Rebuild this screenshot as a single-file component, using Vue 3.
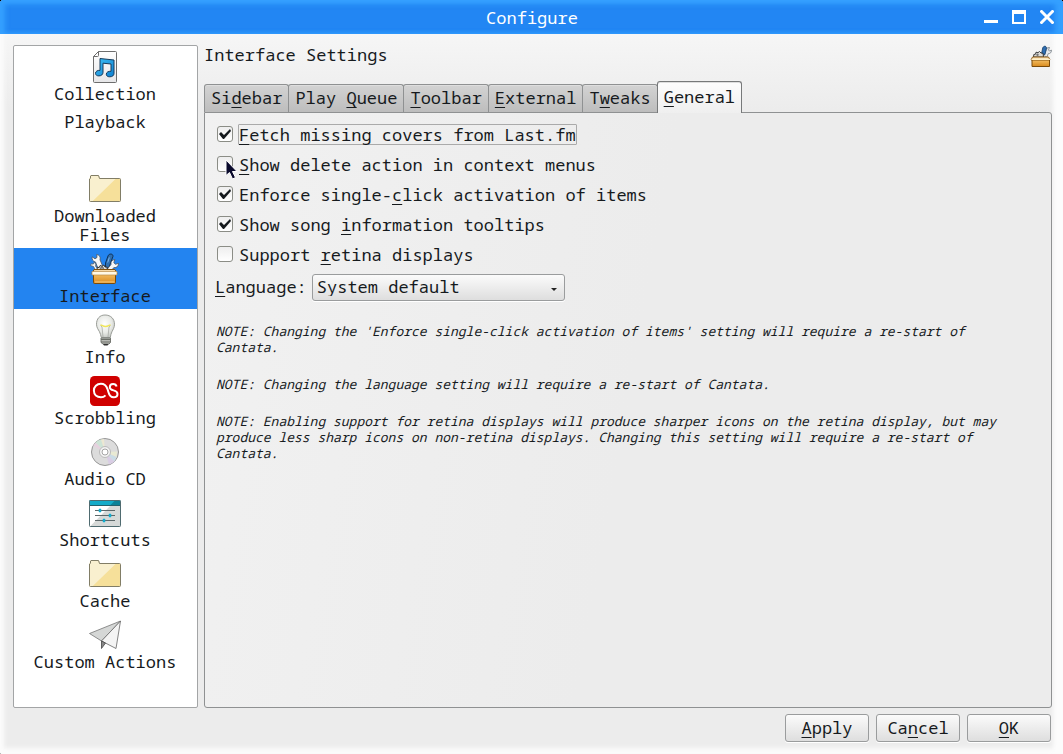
<script setup>
import { ref } from 'vue'

const pages = [
  { icon: 'music', label: 'Collection' },
  { icon: '', label: 'Playback' },
  { icon: 'folder', label: 'Downloaded Files' },
  { icon: 'toolbox', label: 'Interface' },
  { icon: 'bulb', label: 'Info' },
  { icon: 'lastfm', label: 'Scrobbling' },
  { icon: 'disc', label: 'Audio CD' },
  { icon: 'sliders', label: 'Shortcuts' },
  { icon: 'folder', label: 'Cache' },
  { icon: 'plane', label: 'Custom Actions' },
]
const currentPage = ref('Interface')

// Each caption is split around its keyboard accelerator letter.
const tabs = [
  ['Si', 'd', 'ebar'],
  ['Play ', 'Q', 'ueue'],
  ['', 'T', 'oolbar'],
  ['', 'E', 'xternal'],
  ['T', 'w', 'eaks'],
  ['', 'G', 'eneral'],
]
const currentTab = ref(5)

const options = ref([
  { id: 'covers', text: ['', 'F', 'etch missing covers from Last.fm'], on: true, focus: true },
  { id: 'delete', text: ['', 'S', 'how delete action in context menus'], on: false, pointer: true },
  { id: 'click', text: ['Enforce single-', 'c', 'lick activation of items'], on: true },
  { id: 'tooltips', text: ['Show song ', 'i', 'nformation tooltips'], on: true },
  { id: 'retina', text: ['Support ', 'r', 'etina displays'], on: false },
])

const notes = [
  "NOTE: Changing the 'Enforce single-click activation of items' setting will require a re-start of Cantata.",
  'NOTE: Changing the language setting will require a re-start of Cantata.',
  'NOTE: Enabling support for retina displays will produce sharper icons on the retina display, but may produce less sharp icons on non-retina displays. Changing this setting will require a re-start of Cantata.',
]
const language = ref('System default')
</script>

<template>
  <div class="window">
    <svg class="defs" width="0" height="0" aria-hidden="true">
      <defs>
        <linearGradient id="wood" x1="0" y1="0" x2="0" y2="1">
          <stop offset="0" stop-color="#f3bd62" /><stop offset="1" stop-color="#d98a1c" />
        </linearGradient>
        <linearGradient id="lid" x1="0" y1="0" x2="0" y2="1">
          <stop offset="0" stop-color="#f3cf94" /><stop offset="1" stop-color="#fffbe8" />
        </linearGradient>
        <linearGradient id="note" x1="0" y1="0" x2="1" y2="1">
          <stop offset="0" stop-color="#3fc0f5" /><stop offset="1" stop-color="#0d7fd0" />
        </linearGradient>
        <linearGradient id="sheet" x1="0" y1="0" x2="0" y2="1">
          <stop offset="0" stop-color="#ffffff" /><stop offset="1" stop-color="#e6e6e8" />
        </linearGradient>
        <radialGradient id="glass" cx="0.45" cy="0.4" r="0.65">
          <stop offset="0" stop-color="#ffffff" /><stop offset="0.6" stop-color="#e8eae6" /><stop offset="1" stop-color="#c2c5c0" />
        </radialGradient>
        <symbol id="i-music" viewBox="0 0 32 32">
          <path d="M9.500 .500h17a1 1 0 0 1 1 1v29a1 1 0 0 1-1 1h-21a1 1 0 0 1-1-1V5.500z" fill="url(#sheet)" stroke="#6d6d6d" />
          <path d="M9.500.500v4a1 1 0 0 1-1 1h-4z" fill="#fff" stroke="#6d6d6d" />
          <path d="M11 7.500 25 9v13.500c0 2-1.700 3.300-4.200 3.300-2.200 0-3.500-.9-3.500-2.600 0-1.900 2.200-3.200 4.700-2.900V13L14 12.200v9.300c0 2-1.700 3.400-4.100 3.400-2.100 0-3.400-1-3.400-2.600 0-2 2.100-3.200 4.500-2.900z" fill="url(#note)" stroke="#153b5c" />
        </symbol>
        <symbol id="i-folder" viewBox="0 0 32 32">
          <path d="M1.500 2.500h8.500l.8 3H30.500a1 1 0 0 1 1 1v21.500a.8.800 0 0 1-.8.800H1.300a.8.800 0 0 1-.8-.8V6z" fill="#f6e09a" />
          <path d="M1.500 2.500h8.500l.8 3H27L3 28.800H1.300a.8.800 0 0 1-.8-.8V6z" fill="#f9f0cf" />
          <path d="M2 2.500h7.500l1 3H30.500a1 1 0 0 1 1 1V27.500a1 1 0 0 1-1 1h-29a1 1 0 0 1-1-1V6l1-.7V3z" fill="none" stroke="#817d66" />
        </symbol>
        <symbol id="i-toolbox" viewBox="0 0 32 32">
          <path d="M9.500 17 6.500 9C4 8.500 2.600 6.500 3.200 3.800l2.800 2L8 4.500 7.700 1.500c2.700.4 4.200 2.700 3.300 5.300L14.500 15z" fill="#f8f8f8" stroke="#4b545e" stroke-width=".8" />
          <path d="m7 18-2.500-4.500L1.500 12.500l.8-1.700 2 .3.600-1.800 2 1.600-.3 2.300L10 17z" fill="#f4f4f4" stroke="#4b545e" stroke-width=".7" />
          <path d="M16.500 10 19 3c.8-2.500 5-2.800 5 .3L21 11.500l-1.500 4h-3z" fill="#2e6fb2" stroke="#0f3358" />
          <path d="m20.300 4.500-1.600 5" stroke="#7db4e6" fill="none" />
          <path d="m16 19 6-7.500c-.5-2.500 1-4.700 3.800-5l-1 3.200 1.700 1.600 3-1c.2 2.700-1.800 4.700-4.500 4.300L20.500 19z" fill="#f9f9f9" stroke="#4b545e" stroke-width=".8" />
          <path d="m8 17.500.2-3.300 2 .3 1-2 2 .8 1.600-1.300 1.300 2 2.200.2-.2 2 1.300 1.500z" fill="#e2e2df" stroke="#272b2e" />
          <circle cx="13" cy="15.500" r="1.600" fill="#999" stroke="#333" stroke-width=".6" />
          <path d="M5 16.500h21l2 4.500H3z" fill="url(#lid)" stroke="#80500e" />
          <path d="M4.500 21h22v8.500a1 1 0 0 1-1 1h-20a1 1 0 0 1-1-1z" fill="url(#wood)" stroke="#7a4a09" />
          <path d="M6 29h19.500" stroke="#ffdc9b" stroke-width=".8" />
          <path d="M3 18.500h25v3.500h-25z" fill="#fff9e6" stroke="#b98a45" stroke-width=".7" />
        </symbol>
        <symbol id="i-toolbox-small" viewBox="0 0 22 22">
          <path d="m12 10 4-4.500c0-2 1.300-3 3.500-3L18.500 5l1 1 2-.8c0 2.300-1.300 3.500-3.300 3.500L17 12z" fill="#e6e8ea" stroke="#767f86" stroke-width=".8" />
          <path d="m11.500 9 1.200-6c.6-2.300 3.800-2.300 3.800 0L15 9.500z" fill="#2f6db0" stroke="#123b66" stroke-width=".8" />
          <path d="m3.500 12 .3-2.500 1.700-.3.500-2 2 .5 1.500-1.200 1.500 1.500 2 .3.500 3.700z" fill="#dcdcd9" stroke="#2a2d2f" stroke-width=".9" />
          <circle cx="7.500" cy="9.800" r="1.200" fill="#777" />
          <path d="M2.500 12h16l1.500 3H1z" fill="url(#lid)" stroke="#8b5a14" stroke-width=".9" />
          <path d="M2 15h17.500v6.500H2z" fill="url(#wood)" stroke="#7a4a09" />
          <path d="M1.500 14.500h18.500" stroke="#fff0c8" />
        </symbol>
        <symbol id="i-bulb" viewBox="0 0 32 32">
          <path d="M16 1c6 0 9.500 4 9.500 9.200 0 3.300-1.400 5.100-2.600 7.600-.8 1.700-1.300 3.700-1.600 5.700h-9c-.4-2-1-4-1.800-5.700C9.200 15.300 7.500 13.500 7.500 10.200 7.500 5 10.500 1 16 1z" fill="url(#glass)" stroke="#9b9e99" />
          <path d="m14 23-1-10-1.500-1.500M19 23l1-10 1.500-1.500" fill="none" stroke="#a9aca7" stroke-width=".8" />
          <path d="M11.500 11c2 0 2 1.500 5 1.500s3-1.500 5-1.500" fill="none" stroke="#f0e65a" stroke-width="1.500" />
          <path d="M12 24h9.500v4.500L20 30h-6L12 28.500z" fill="#b8bab5" stroke="#777a74" />
          <path d="M12 25.500h9.500M12 28h9.500" stroke="#6c6f69" />
          <path d="M14 30h5.500l-1 1.500H15z" fill="#303030" />
        </symbol>
        <symbol id="i-lastfm" viewBox="0 0 32 32">
          <rect x="1" y="1" width="30" height="30" rx="4.500" fill="#d00000" />
          <path d="M16.500 20.400c-1.200 1.300-2.600 1.900-4.500 1.900-4.200 0-7.100-2.600-7.100-6.700 0-4 2.900-6.800 7-6.800 3.500 0 5.300 1.600 6.500 5l1 3.200c.9 3.400 2.300 5.300 5.200 5.300 2.200 0 3.900-1.300 3.900-3.400 0-4.700-7.700-2.400-7.700-6.700 0-1.900 1.400-3.300 3.300-3.300 1.800 0 3.100.8 3.500 2.600" fill="none" stroke="#fff" stroke-width="2" />
        </symbol>
        <symbol id="i-disc" viewBox="0 0 32 32">
          <circle cx="16" cy="16" r="13.500" fill="#dcdcdc" stroke="#969696" />
          <path d="M16 16 6.500 6.500A13 13 0 0 1 12 3.600z" fill="#cde4d6" />
          <path d="M16 16 4.300 10A13 13 0 0 1 6.500 6.500z" fill="#e6d2df" />
          <path d="M16 16 12 3.600a13 13 0 0 1 3-.6z" fill="#ece8d2" />
          <path d="m16 16 9.500 9.500a13 13 0 0 1-5.500 3z" fill="#d9cde4" />
          <path d="m16 16 12-.5a13 13 0 0 1-.8 5.500z" fill="#e9ead3" />
          <path d="m16 16 11.200 5a13 13 0 0 1-1.700 4.500z" fill="#cadce6" />
          <circle cx="16" cy="16" r="5.500" fill="#f3f3f3" stroke="#bababa" />
          <circle cx="16" cy="16" r="3" fill="#fff" stroke="#a5a5a5" />
        </symbol>
        <symbol id="i-sliders" viewBox="0 0 32 32">
          <path d="M.500 3.500h31v26H.500z" fill="#d6d9d8" />
          <path d="M.500 8.500h21L1 29.500H.500z" fill="#fff" />
          <path d="M.500 3.500h31v5H.500z" fill="#0c8197" />
          <path d="M.500 3.500h25.500l-5 5H.500z" fill="#14abc9" />
          <rect x=".5" y="3.500" width="31" height="26" rx=".8" fill="none" stroke="#4f6b70" />
          <path d="M1 8.500h30" stroke="#24606c" />
          <path d="M6 13.500h20M6 18.500h20M6 23.500h20" stroke="#5d686a" />
          <path d="M10 12h2v3h-2zM20 17h2v3h-2zM14 22h2v3h-2z" fill="#10afd0" stroke="#10afd0" stroke-width=".5" />
        </symbol>
        <symbol id="i-plane" viewBox="0 0 32 32">
          <path d="M31.500 2 .500 14.500 12.500 22z" fill="#d5d7d6" stroke="#757575" stroke-width=".8" />
          <path d="M31.500 2 12.500 22 27 29.500z" fill="#f4f4f4" stroke="#666" stroke-width=".8" />
          <path d="M12.500 22v7.500l4-5.500z" fill="#888" stroke="#454545" stroke-width=".8" />
        </symbol>
      </defs>
    </svg>

    <header class="titlebar">
      <h1>Configure</h1>
      <div class="controls">
        <button type="button" aria-label="Minimize">
          <svg width="14" height="14" viewBox="0 0 14 14"><path d="M0 11.500h14" stroke="#fff" stroke-width="3" /></svg>
        </button>
        <button type="button" aria-label="Maximize">
          <svg width="14" height="14" viewBox="0 0 14 14"><path d="M0 0h14v14H0zM2 4v8h10V4z" fill="#fff" fill-rule="evenodd" /></svg>
        </button>
        <button type="button" aria-label="Close">
          <svg width="14" height="14" viewBox="0 0 14 14"><path d="M.500.500l13 13M13.500.500l-13 13" stroke="#fff" stroke-width="3" /></svg>
        </button>
      </div>
    </header>

    <div class="body">
      <nav class="pages">
        <button
          v-for="page in pages"
          :key="page.label"
          type="button"
          class="page"
          :class="{ current: page.label === currentPage, plain: !page.icon }"
          @click="currentPage = page.label"
        >
          <svg v-if="page.icon" width="32" height="32" aria-hidden="true"><use :href="'#i-' + page.icon" /></svg>
          <span>{{ page.label }}</span>
        </button>
      </nav>

      <main class="content">
        <div class="heading">
          <h2>Interface Settings</h2>
          <svg width="22" height="22" aria-hidden="true"><use href="#i-toolbox-small" /></svg>
        </div>

        <div class="tabs" role="tablist">
          <button
            v-for="(tab, i) in tabs"
            :key="i"
            type="button"
            role="tab"
            class="tab"
            :class="{ active: i === currentTab }"
            :aria-selected="i === currentTab"
            @click="currentTab = i"
          >{{ tab[0] }}<u>{{ tab[1] }}</u>{{ tab[2] }}</button>
        </div>

        <section class="panel">
          <div v-for="option in options" :key="option.id" class="option">
            <input :id="option.id" v-model="option.on" type="checkbox" />
            <label :for="option.id" :class="{ focused: option.focus }">{{ option.text[0] }}<u>{{ option.text[1] }}</u>{{ option.text[2] }}</label>
            <svg v-if="option.pointer" class="pointer" width="14" height="22" viewBox="0 0 14 22" aria-hidden="true">
              <path d="M1 1v15.500l3.500-3L7.500 20l3-1.500-3-6H12z" fill="#0a0a2c" stroke="#fff" />
            </svg>
          </div>

          <div class="language">
            <label for="language"><u>L</u>anguage:</label>
            <div class="combo">
              <select id="language" v-model="language">
                <option>System default</option>
              </select>
              <svg width="8" height="5" viewBox="0 0 8 5" aria-hidden="true"><path d="M1 1h6L4 4z" fill="#222" /></svg>
            </div>
          </div>

          <div class="notes">
            <p v-for="note in notes" :key="note">{{ note }}</p>
          </div>
        </section>
      </main>
    </div>

    <footer class="actions">
      <button type="button"><u>A</u>pply</button>
      <button type="button">Ca<u>n</u>cel</button>
      <button type="button"><u>O</u>K</button>
    </footer>
  </div>
</template>

<style>
body {
  margin: 0;
  background: #000;
}
</style>

<style scoped>
.window {
  display: flex;
  flex-direction: column;
  box-sizing: border-box;
  min-height: 100vh;
  overflow: hidden;
  border-radius: 4px 4px 0 2px;
  background: linear-gradient(#f6f6f6 34px, #ececec 110px);
  box-shadow: inset 4px 0 4px #fbfbfb, inset -10px 0 4px #fcfcfc, inset 0 -6px 4px #fbfbfb;
  color: #161a1d;
  font-family: "Noto Sans Mono", "DejaVu Sans Mono", monospace;
  font-size: 17px;
  line-height: 19px;
}

.defs {
  position: absolute;
}

button,
select {
  font: inherit;
  color: inherit;
}

u {
  text-decoration-thickness: 1px;
  text-underline-offset: 3px;
}

.titlebar {
  display: grid;
  grid-template-columns: 1fr auto 1fr;
  align-items: center;
  height: 34px;
  padding: 0 9px 0 10px;
  background: #2286f3;
  box-shadow: inset 0 4px 5px #35a0ff, inset 5px 0 5px #35a0ff, inset -8px 0 5px #35a0ff;
  color: #fff;
}

.titlebar h1 {
  grid-column: 2;
  margin: 0;
  font-size: 17px;
  font-weight: normal;
}

.controls {
  display: flex;
  justify-content: flex-end;
  gap: 14px;
}

.controls button {
  display: flex;
  padding: 0;
  border: 0;
  background: none;
}

.body {
  display: flex;
  flex: 1;
  gap: 6px;
  padding: 11px 11px 0 13px;
}

.pages {
  box-sizing: border-box;
  flex: none;
  width: 185px;
  border: 1px solid #a3a5a6;
  border-radius: 2px;
  background: #fff;
}

.page {
  display: flex;
  flex-direction: column;
  align-items: center;
  gap: 1px;
  box-sizing: border-box;
  width: 100%;
  min-height: 61px;
  padding: 5px 21px 4px 20px;
  border: 0;
  background: none;
}

.page.current {
  background: #2384f0;
}

.page:last-child {
  padding-right: 1px;
  padding-left: 0;
}

.content {
  display: flex;
  flex: 1;
  flex-direction: column;
  min-width: 0;
}

.heading {
  display: flex;
  justify-content: space-between;
  align-items: flex-start;
  height: 22px;
}

.heading h2 {
  margin: 0;
  font-size: 17px;
  font-weight: normal;
}

.tabs {
  display: flex;
  align-items: flex-end;
  margin-top: 14px;
}

.tab {
  height: 28px;
  margin-right: -1px;
  padding: 0 6px 2px;
  border: 1px solid #8f9192;
  border-bottom: 0;
  border-radius: 3px 3px 0 0;
  background: linear-gradient(#d3d3d3, #bdbdbd);
  box-shadow: inset 0 1px #dedede;
}

.tab.active {
  position: relative;
  height: 32px;
  margin-bottom: -1px;
  border-color: #77797a;
  background: linear-gradient(#fdfdfd, #efefef);
}

.panel {
  flex: 1;
  padding: 6px 10px;
  border: 1px solid #8f9192;
  border-radius: 0 3px 3px 3px;
  background: linear-gradient(100deg, #f1f1f1, #ececec 50%);
}

.option {
  position: relative;
  display: flex;
  align-items: center;
  gap: 5px;
  height: 30px;
  padding-left: 2px;
}

.option input {
  appearance: none;
  display: grid;
  flex: none;
  width: 16px;
  height: 16px;
  margin: 0;
  border: 1px solid #8b8d86;
  border-radius: 3px;
  background: linear-gradient(#eee, #fff);
}

.option input:checked::before {
  content: "";
  background: #14191c;
  clip-path: polygon(1px 7px, 3px 5px, 6px 8px, 12px 2px, 13px 4px, 6px 12px, 5px 12px);
}

.option label {
  border: 1px solid transparent;
}

.option label.focused {
  border-color: #aaa;
  border-radius: 1px;
}

.pointer {
  position: absolute;
  left: 10px;
  top: 10px;
}

.language {
  display: flex;
  align-items: center;
  gap: 5px;
  margin-top: 5px;
}

.language label {
  padding-bottom: 2px;
}

.combo {
  position: relative;
}

.combo select {
  appearance: none;
  box-sizing: border-box;
  width: 253px;
  height: 27px;
  padding: 0 24px 2px 4px;
  border: 1px solid #9a9c9d;
  border-radius: 3px;
  background: linear-gradient(#fbfbfb, #dedede);
  box-shadow: 0 1px #fff;
}

.combo svg {
  position: absolute;
  right: 7px;
  top: 13px;
  pointer-events: none;
}

.notes {
  display: flex;
  flex-direction: column;
  gap: 21px;
  margin-top: 22px;
  padding: 0 24px 0 1px;
  font-size: 13px;
  font-style: italic;
  line-height: 16px;
}

.notes p {
  margin: 0;
}

.actions {
  display: flex;
  justify-content: flex-end;
  gap: 7px;
  padding: 6px 12px 12px;
}

.actions button {
  width: 84px;
  height: 28px;
  padding: 0 0 2px;
  border: 1px solid #9a9c9d;
  border-radius: 3px;
  background: linear-gradient(#fbfbfb, #dedede);
  box-shadow: 0 1px #fff;
}
</style>
